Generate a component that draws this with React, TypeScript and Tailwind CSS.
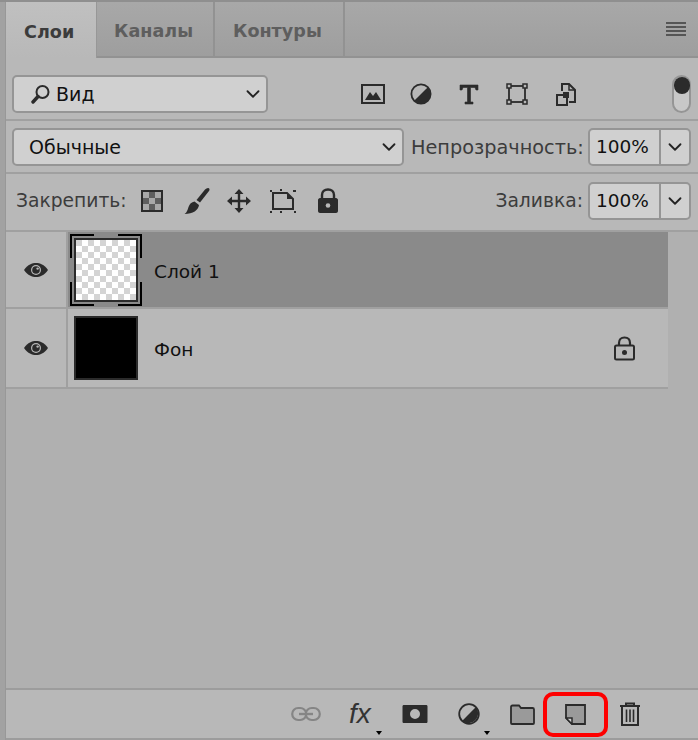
import { ChevronDown } from 'lucide-react'

const font = 'font-["DejaVu_Sans",sans-serif]'

function Eye() {
  return (
    <svg width="26" height="16" viewBox="0 0 26 16">
      <path d="M1 8 C5 2.5 9 1 13 1 C17 1 21 2.5 25 8 C21 13.5 17 15 13 15 C9 15 5 13.5 1 8 Z" fill="#2b2b2b" />
      <circle cx="13" cy="8" r="5" fill="#b8b8b8" />
      <circle cx="13" cy="8" r="3.8" fill="#2b2b2b" />
      <circle cx="14.6" cy="6.6" r="1.2" fill="#b8b8b8" />
    </svg>
  )
}

function Chevron() {
  return <ChevronDown className="w-[22px] h-[22px] text-[#222]" strokeWidth={2} />
}

function PercentBox() {
  return (
    <div className="flex w-[103px] h-[38px] rounded-[5px] border-2 border-[#959595] bg-[#d0d0d0]">
      <div className="w-[71px] border-r-2 border-[#959595] pl-[6px] pt-[1px] flex items-center text-[18.5px] text-[#111]">100%</div>
      <div className="flex-1 flex items-center justify-center"><Chevron /></div>
    </div>
  )
}

export default function App() {
  return (
    <div className={`${font} w-[698px] h-[740px] bg-[#a8a8a8] flex flex-col overflow-hidden`}>
      <div className="h-[2px] bg-[#8f8f8f]" />
      <div className="flex flex-1 min-h-0">
        <div className="w-[6px] bg-[#a2a2a2] border-r border-[#989898]" />
        <div className="flex-1 flex flex-col min-w-0 bg-[#b8b8b8]">
          {/* Tabs */}
          <div className="h-[56px] flex bg-gradient-to-b from-[#a8a8a8] to-[#9e9e9e] border-b-2 border-[#929292] relative">
            <div className="w-[91px] h-[56px] bg-gradient-to-b from-[#c0c0c0] to-[#b8b8b8] border-r border-[#979797] flex items-center pl-[18px] font-bold text-[17.6px] text-[#3c3c3c] pt-[4px]">Слои</div>
            <div className="w-[118px] border-r-2 border-[#929292] flex items-center pl-[17px] font-bold text-[17.6px] text-[#5e5e5e] pt-[4px]">Каналы</div>
            <div className="w-[130px] border-r-2 border-[#929292] flex items-center pl-[18px] font-bold text-[17.6px] text-[#5e5e5e] pt-[4px]">Контуры</div>
            <div className="ml-auto mr-[12px] mt-[20px] w-[20px] h-[14px] flex flex-col justify-between">
              <div className="h-[2px] bg-[#555]" />
              <div className="h-[2px] bg-[#555]" />
              <div className="h-[2px] bg-[#555]" />
              <div className="h-[2px] bg-[#555]" />
            </div>
          </div>

          {/* Filter row */}
          <div className="h-[63px] flex items-center pl-[6px] pr-[7px] border-b-2 border-[#a0a0a0] pt-[12px] pb-[1px]">
            <div className="w-[256px] h-[38px] rounded-[5px] border-2 border-[#959595] bg-[#d0d0d0] flex items-center pl-[17px] pr-[2px] text-[19px] text-[#111]">
              <svg width="20" height="20" viewBox="0 0 20 20" className="mr-[5px]">
                <circle cx="11.5" cy="8" r="6" fill="none" stroke="#2b2b2b" strokeWidth="2" />
                <path d="M7 12.5 L2 18" stroke="#2b2b2b" strokeWidth="3.4" strokeLinecap="round" />
              </svg>
              Вид
              <span className="ml-auto"><Chevron /></span>
            </div>
            <svg width="24" height="20" viewBox="0 0 24 20" className="ml-[93px]">
              <rect x="1" y="1" width="22" height="18" fill="none" stroke="#2b2b2b" strokeWidth="2" />
              <path d="M4 16 L9 8 L12 12 L15 8 L20 16 Z" fill="#2b2b2b" />
            </svg>
            <svg width="22" height="22" viewBox="0 0 22 22" className="ml-[25px]">
              <circle cx="11" cy="11" r="9.6" fill="none" stroke="#2b2b2b" strokeWidth="1.8" />
              <path d="M17.8 4.2 A9.6 9.6 0 0 1 4.2 17.8 Z" fill="#2b2b2b" />
            </svg>
            <svg width="20" height="21" viewBox="0 0 20 21" className="ml-[27px]">
              <path d="M1 6 V1 H19 V6 H17 L16 3.5 H11.5 V18 H14 V20 H6 V18 H8.5 V3.5 H4 L3 6 Z" fill="#2b2b2b" stroke="#2b2b2b" strokeWidth="0.6" />
            </svg>
            <svg width="22" height="22" viewBox="0 0 22 22" className="ml-[27px]">
              <rect x="3" y="3" width="16" height="16" fill="none" stroke="#2b2b2b" strokeWidth="1.8" />
              <rect x="1" y="1" width="4" height="4" fill="#b8b8b8" stroke="#2b2b2b" strokeWidth="1.5" />
              <rect x="17" y="1" width="4" height="4" fill="#b8b8b8" stroke="#2b2b2b" strokeWidth="1.5" />
              <rect x="1" y="17" width="4" height="4" fill="#b8b8b8" stroke="#2b2b2b" strokeWidth="1.5" />
              <rect x="17" y="17" width="4" height="4" fill="#b8b8b8" stroke="#2b2b2b" strokeWidth="1.5" />
            </svg>
            <svg width="20" height="23" viewBox="0 0 20 23" className="ml-[28px]">
              <path d="M6 8 V1 H13 L19 7 V19 H13" fill="none" stroke="#2b2b2b" strokeWidth="2" />
              <path d="M13 1 V7 H19" fill="none" stroke="#2b2b2b" strokeWidth="1.5" />
              <rect x="1" y="12" width="10" height="10" fill="#b8b8b8" stroke="#2b2b2b" strokeWidth="2" />
              <rect x="7" y="9" width="6" height="6" fill="#2b2b2b" />
            </svg>
            <div className="ml-auto w-[19px] h-[38px] rounded-full border-2 border-[#959595] bg-[#c8c8c8] relative">
              <div className="absolute -left-[0.5px] -top-[0.5px] w-[16px] h-[17px] rounded-full bg-[#2b2b2b]" />
            </div>
          </div>

          {/* Blend row */}
          <div className="h-[53px] flex items-center pl-[6px] pr-[7px] border-b-2 border-[#a0a0a0]">
            <div className="w-[392px] h-[38px] rounded-[5px] border-2 border-[#959595] bg-[#d0d0d0] flex items-center pl-[15px] pr-[2px] pt-[1px] text-[19px] text-[#111]">
              Обычные
              <span className="ml-auto"><Chevron /></span>
            </div>
            <span className="ml-[7px] pt-[3px] text-[19.3px] text-[#3c3c3c] w-[177px] whitespace-nowrap">Непрозрачность:</span>
            <PercentBox />
          </div>

          {/* Lock row */}
          <div className="h-[58px] flex items-center pl-[10px] pr-[7px] pb-[3px] border-b-2 border-[#a0a0a0] text-[18.7px] text-[#3c3c3c]">
            <span className="w-[125px] whitespace-nowrap pt-[1px]">Закрепить:</span>
            <svg width="22" height="22" viewBox="0 0 22 22">
              <rect x="1" y="1" width="20" height="20" fill="#a8a8a8" stroke="#2b2b2b" strokeWidth="2" />
              <path d="M8 2 H14 V8 H8 Z M2 8 H8 V14 H2 Z M14 8 H20 V14 H14 Z M8 14 H14 V20 H8 Z" fill="#5e5e5e" />
            </svg>
            <svg width="28" height="28" viewBox="0 0 28 28" className="ml-[20px]">
              <path d="M25 1 C26.5 1 27 2.5 26 4 L17 15.5 L13.5 13 L22 2.5 C23 1.5 24 1 25 1 Z" fill="#2b2b2b" />
              <path d="M11.5 14.5 L16 18 C15.5 23 10 27 1.5 27 C4 25.5 4.5 23 5.5 20 C6.5 17 8.5 15 11.5 14.5 Z" fill="#2b2b2b" />
            </svg>
            <svg width="26" height="26" viewBox="0 0 26 26" className="ml-[15px]">
              <path d="M13 1 L17.5 6 H14.2 V11.8 H20 V8.5 L25 13 L20 17.5 V14.2 H14.2 V20 H17.5 L13 25 L8.5 20 H11.8 V14.2 H6 V17.5 L1 13 L6 8.5 V11.8 H11.8 V6 H8.5 Z" fill="#2b2b2b" />
            </svg>
            <svg width="28" height="26" viewBox="0 0 28 26" className="ml-[17px]">
              <path d="M4 5 H18 L24 11 V21 H4 Z" fill="none" stroke="#2b2b2b" strokeWidth="2" />
              <path d="M18 5 V11 H24 Z" fill="#2b2b2b" />
              <path d="M1 3 H3 M24 3 H27 M1 24 H3 M11 2 H13 M11 24 H13 M25 24 H27" stroke="#2b2b2b" strokeWidth="2" />
            </svg>
            <svg width="22" height="26" viewBox="0 0 22 26" className="ml-[20px]">
              <path d="M5 11 V7 C5 3.5 7.5 1.5 11 1.5 C14.5 1.5 17 3.5 17 7 V11" fill="none" stroke="#2b2b2b" strokeWidth="2.4" />
              <path d="M3 10 H19 C20 10 21 11 21 12 V23 C21 24 20 25 19 25 H3 C2 25 1 24 1 23 V12 C1 11 2 10 3 10 Z" fill="#2b2b2b" />
              <circle cx="11" cy="17.5" r="2.3" fill="#b8b8b8" />
            </svg>
            <span className="ml-auto mr-[5px] pt-[1px] whitespace-nowrap">Заливка:</span>
            <PercentBox />
          </div>

          {/* Layers + scroll gutter */}
          <div className="flex-1 flex min-h-0 bg-[#b0b0b0]">
            <div className="w-[662px] flex flex-col">
              <div className="h-[77px] flex border-b-2 border-[#a0a0a0]">
                <div className="w-[62px] bg-[#b8b8b8] border-r-2 border-[#a0a0a0] flex items-center justify-center"><Eye /></div>
                <div className="flex-1 bg-[#8a8a8a] flex items-center relative">
                  <div className="relative ml-[6px] w-[64px] h-[64px] border-2 border-[#2b2b2b] bg-white overflow-hidden">
                    <div className="absolute inset-0 bg-[repeating-conic-gradient(#ffffff_0%_25%,#d4d4d4_0%_50%)] bg-[length:12px_12px]" />
                  </div>
                  <div className="absolute left-[2px] top-[2px] w-[24px] h-[24px] border-l-2 border-t-2 border-black" />
                  <div className="absolute left-[50px] top-[2px] w-[24px] h-[24px] border-r-2 border-t-2 border-black" />
                  <div className="absolute left-[2px] top-[50px] w-[24px] h-[24px] border-l-2 border-b-2 border-black" />
                  <div className="absolute left-[50px] top-[50px] w-[24px] h-[24px] border-r-2 border-b-2 border-black" />
                  <span className="ml-[16px] pt-[5px] text-[18.5px] text-[#111]">Слой 1</span>
                </div>
              </div>
              <div className="h-[80px] flex border-b-2 border-[#a0a0a0] bg-[#b8b8b8]">
                <div className="w-[62px] border-r-2 border-[#a0a0a0] flex items-center justify-center"><Eye /></div>
                <div className="flex-1 flex items-center">
                  <div className="ml-[6px] w-[64px] h-[64px] border-2 border-[#2b2b2b] bg-black" />
                  <span className="ml-[16px] pt-[4px] text-[18.5px] text-[#111]">Фон</span>
                  <svg width="21" height="25" viewBox="0 0 21 25" className="ml-auto mr-[33px]">
                    <path d="M5 10 V7 C5 3.5 7 1.5 10.5 1.5 C14 1.5 16 3.5 16 7 V10" fill="none" stroke="#2b2b2b" strokeWidth="2.2" />
                    <rect x="1" y="9.5" width="19" height="14" rx="1.5" fill="none" stroke="#2b2b2b" strokeWidth="2" />
                    <circle cx="10.5" cy="16.5" r="2.5" fill="#2b2b2b" />
                  </svg>
                </div>
              </div>
            </div>
          </div>

          {/* Bottom toolbar */}
          <div className="h-[50px] border-t-2 border-[#9c9c9c] flex items-center">
            <svg width="30" height="16" viewBox="0 0 30 16" className="ml-[285px]">
              <rect x="1.2" y="2" width="14" height="12" rx="6" fill="none" stroke="#858585" strokeWidth="2.2" />
              <rect x="14.8" y="2" width="14" height="12" rx="6" fill="none" stroke="#858585" strokeWidth="2.2" />
              <path d="M8 8 H22" stroke="#858585" strokeWidth="2.4" />
            </svg>
            <div className="ml-[28px] relative w-[28px] h-[30px]">
              <span className="font-['Liberation_Sans',sans-serif] italic text-[28px] leading-[30px] text-[#333]">fx</span>
              <div className="absolute left-[27px] top-[32px] w-0 h-0 border-x-[3px] border-x-transparent border-t-[4px] border-t-black" />
            </div>
            <svg width="26" height="20" viewBox="0 0 26 20" className="ml-[25px]">
              <path fillRule="evenodd" d="M2 1 H24 C25 1 25.5 1.5 25.5 2.5 V17.5 C25.5 18.5 25 19 24 19 H2 C1 19 0.5 18.5 0.5 17.5 V2.5 C0.5 1.5 1 1 2 1 Z M13 5 A5 5 0 1 0 13 15 A5 5 0 1 0 13 5 Z" fill="#2b2b2b" />
            </svg>
            <div className="ml-[30px] relative w-[22px] h-[22px]">
              <svg width="22" height="22" viewBox="0 0 22 22">
                <circle cx="11" cy="11" r="9.8" fill="none" stroke="#2b2b2b" strokeWidth="1.8" />
                <path d="M17.9 4.1 A9.8 9.8 0 0 1 4.1 17.9 Z" fill="#2b2b2b" />
              </svg>
              <div className="absolute left-[26px] top-[28px] w-0 h-0 border-x-[3px] border-x-transparent border-t-[4px] border-t-black" />
            </div>
            <svg width="25" height="21" viewBox="0 0 25 21" className="ml-[30px]">
              <path d="M1 19 V3 C1 2 1.5 1.5 2.5 1.5 H9 L11 4 H22.5 C23.5 4 24 4.5 24 5.5 V19 C24 19.5 23.5 20 23 20 H2 C1.5 20 1 19.5 1 19 Z" fill="#9a9a9a" stroke="#2b2b2b" strokeWidth="1.8" />
            </svg>
            <div className="ml-[8px] w-[65px] h-[45px] rounded-[10px] border-[4px] border-[#fe0000] flex items-center justify-center">
              <svg width="21" height="21" viewBox="0 0 21 21">
                <path d="M1 1 H20 V20 H7 L1 14 Z" fill="#9a9a9a" stroke="#2b2b2b" strokeWidth="1.8" />
                <path d="M1 14 H7 V20 Z" fill="#cfcfcf" stroke="#2b2b2b" strokeWidth="1.5" />
              </svg>
            </div>
            <svg width="22" height="24" viewBox="0 0 22 24" className="ml-[11px]">
              <path d="M1 4 H21 M7 4 V1.5 H15 V4" fill="none" stroke="#2b2b2b" strokeWidth="2" />
              <path d="M3 5 V23 H19 V5" fill="none" stroke="#2b2b2b" strokeWidth="2" />
              <path d="M7.5 7.5 V20 M11 7.5 V20 M14.5 7.5 V20" stroke="#2b2b2b" strokeWidth="1.6" />
            </svg>
          </div>
          <div className="h-[2px] bg-[#9c9c9c]" />
        </div>
      </div>
    </div>
  )
}
